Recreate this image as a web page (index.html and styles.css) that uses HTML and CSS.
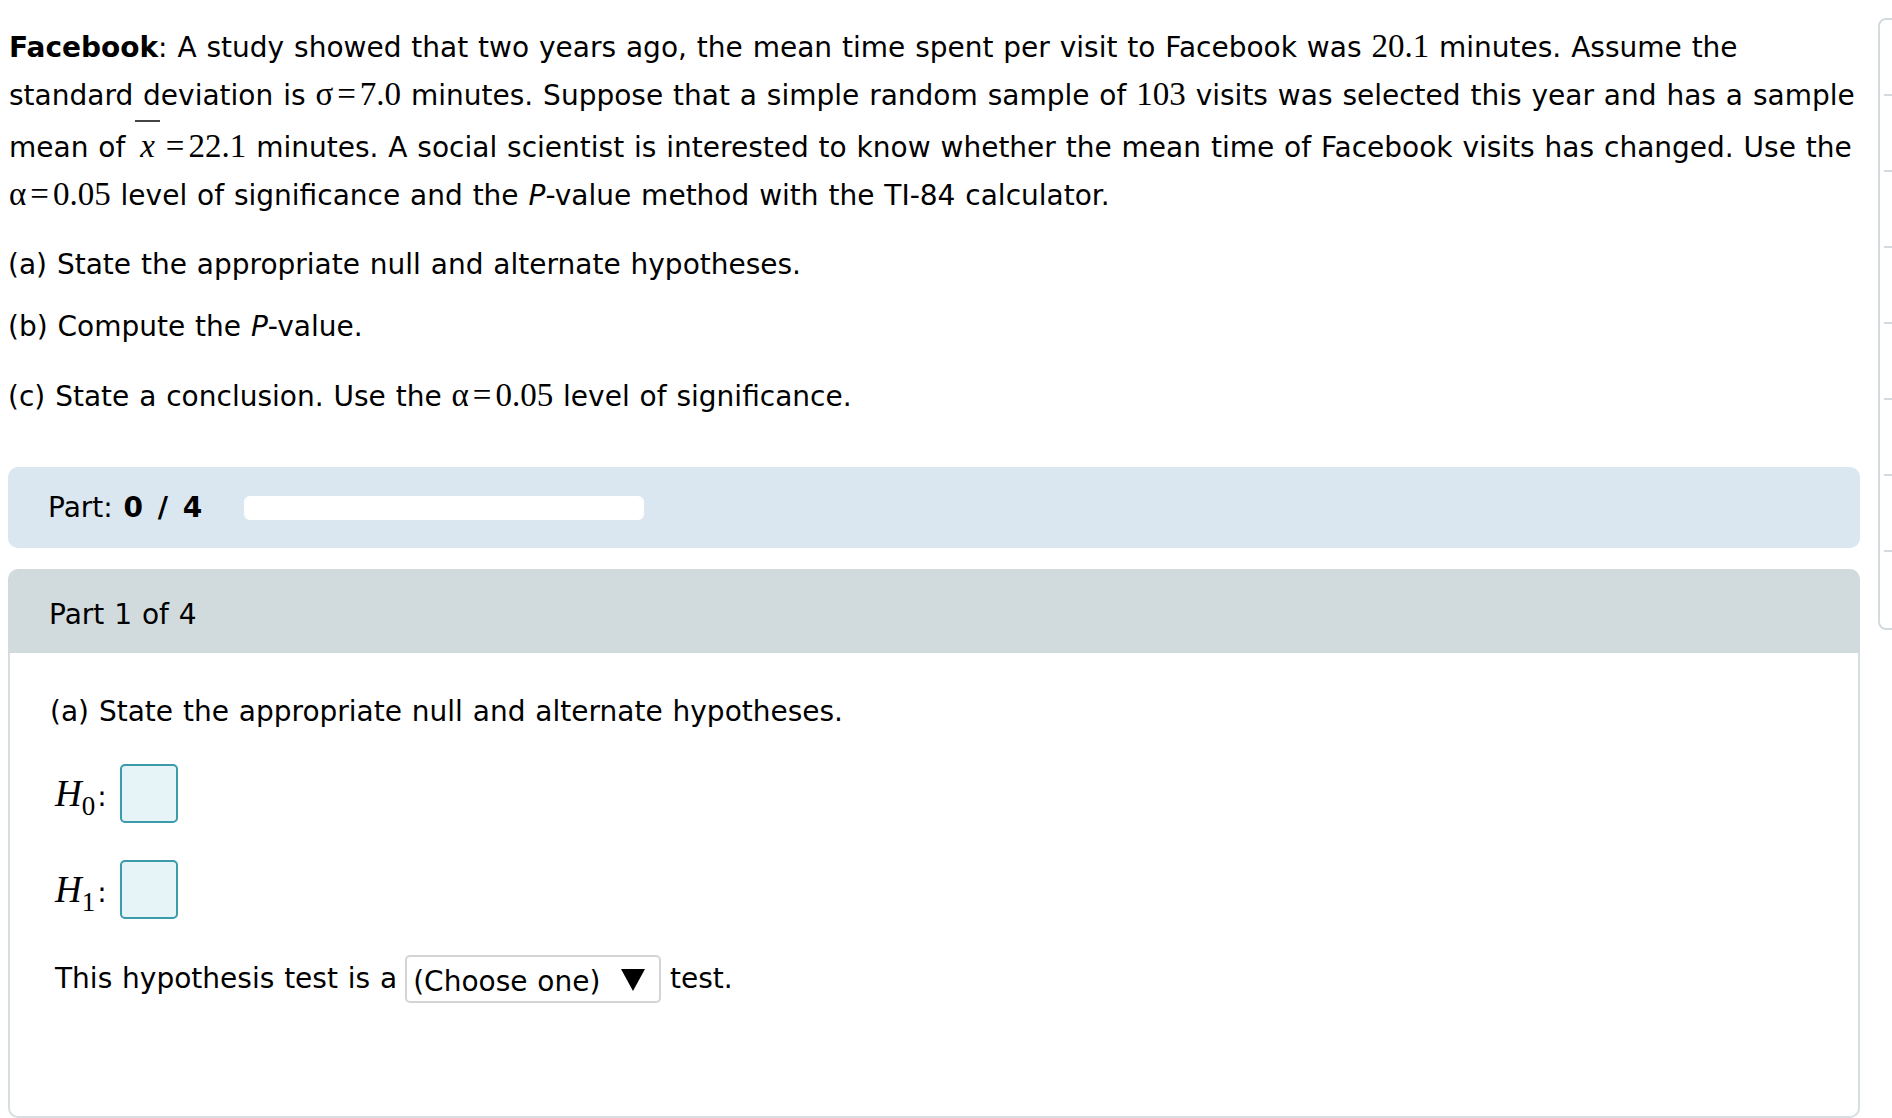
FILE: index.html
```html
<!DOCTYPE html>
<html>
<head>
<meta charset="utf-8">
<link rel="stylesheet" href="styles.css">
</head>
<body>
<div class="page">
  <div class="main">
    <p class="intro"><b>Facebook</b>: A study showed that two years ago, the mean time spent per visit to Facebook was <span class="m">20.1</span> minutes. Assume the standard deviation is <span class="m">σ<span class="eq">=</span>7.0</span> minutes. Suppose that a simple random sample of <span class="m">103</span> visits was selected this year and has a sample mean of <span class="m"><span class="xbar">x</span><span class="eq">=</span>22.1</span> minutes. A social scientist is interested to know whether the mean time of Facebook visits has changed. Use the <span class="m">α<span class="eq">=</span>0.05</span> level of significance and the <i>P</i>-value method with the TI-84 calculator.</p>
    <p class="q qa">(a) State the appropriate null and alternate hypotheses.</p>
    <p class="q qb">(b) Compute the <i>P</i>-value.</p>
    <p class="q qc">(c) State a conclusion. Use the <span class="m">α<span class="eq">=</span>0.05</span> level of significance.</p>

    <div class="progress">
      <span class="progress-label">Part: <b>0 / 4</b></span>
      <span class="progress-bar"></span>
    </div>

    <div class="part">
      <div class="part-head">Part 1 of 4</div>
      <div class="part-body">
        <p class="part-q">(a) State the appropriate null and alternate hypotheses.</p>
        <div class="hyp">
          <span class="hyp-label"><span class="hv">H</span><sub class="hs">0</sub><span class="colon">:</span></span>
          <span class="answer"></span>
        </div>
        <div class="hyp hyp2">
          <span class="hyp-label"><span class="hv">H</span><sub class="hs">1</sub><span class="colon">:</span></span>
          <span class="answer"></span>
        </div>
        <div class="test-line">This hypothesis test is a <span class="select"><span class="select-text">(Choose one)</span><svg class="select-arrow" width="24" height="22" viewBox="0 0 24 22"><polygon points="0,0 24,0 12,22" fill="#000"/></svg></span> test.</div>
      </div>
    </div>
  </div>
  <div class="side">
    <div class="side-box">
      <div class="side-item"></div>
      <div class="side-item"></div>
      <div class="side-item"></div>
      <div class="side-item"></div>
      <div class="side-item"></div>
      <div class="side-item"></div>
      <div class="side-item"></div>
      <div class="side-item last"></div>
    </div>
  </div>
</div>
</body>
</html>
```

FILE: styles.css
```css
html, body {
  margin: 0;
  padding: 0;
  overflow: hidden;
  background: #fff;
}
body {
  font-family: "DejaVu Sans", Verdana, sans-serif;
  font-size: 28px;
  color: #000;
  word-spacing: 1px;
}
.page {
  display: flex;
  gap: 18px;
  padding: 0 0 0 8px;
  width: 1940px;
  height: 1118px;
}
.main {
  width: 1852px;
  flex: none;
  padding-top: 24px;
}
.intro {
  margin: 0;
  line-height: 48px;
  padding-left: 1px;
}
.m {
  font-family: "Liberation Serif", "Times New Roman", serif;
  font-size: 33px;
  line-height: 1;
  word-spacing: 0;
}
.eq {
  margin: 0 4px;
}
.xbar {
  display: inline-block;
  font-style: italic;
  border-top: 2px solid #444;
  padding: 8px 5px 0 5px;
  line-height: 1;
  margin-right: 2px;
}
.q {
  margin: 0;
  line-height: 48px;
}
.qa { margin-top: 21px; }
.qb { margin-top: 14px; }
.qc { margin-top: 22px; }

.progress {
  margin-top: 46px;
  height: 81px;
  background: #dae7f0;
  border-radius: 10px;
  display: flex;
  align-items: center;
  padding-left: 40px;
  gap: 41px;
}
.progress-label {
  word-spacing: 2px;
}
.progress-label b {
  letter-spacing: 1px;
  word-spacing: 3px;
}
.progress-bar {
  display: block;
  width: 400px;
  height: 24px;
  background: #fff;
  border-radius: 6px;
}

.part {
  margin-top: 21px;
}
.part-head {
  height: 84px;
  box-sizing: border-box;
  background: #d1dadd;
  border-radius: 10px 10px 0 0;
  padding: 26px 0 0 41px;
  line-height: 40px;
}
.part-body {
  height: 465px;
  box-sizing: border-box;
  border: 2px solid #d6dee1;
  border-top: none;
  border-radius: 0 0 10px 10px;
  padding: 35px 0 0 40px;
}
.part-q {
  margin: 0;
  line-height: 48px;
}
.hyp {
  display: flex;
  align-items: center;
  margin-top: 28px;
  padding-left: 5px;
  height: 59px;
}
.hyp2 { margin-top: 37px; }
.hyp-label {
  font-family: "Liberation Serif", "Times New Roman", serif;
  font-size: 37px;
  line-height: 1;
  width: 65px;
  flex: none;
}
.hv { font-style: italic; }
.hs {
  font-size: 27px;
  vertical-align: -9px;
  line-height: 0;
}
.colon {
  font-family: "DejaVu Sans", Verdana, sans-serif;
  font-size: 28px;
  margin-left: 2px;
}
.answer {
  display: block;
  width: 58px;
  height: 59px;
  box-sizing: border-box;
  border: 2px solid #3b9bab;
  border-radius: 5px;
  background: #e6f4f8;
}
.test-line {
  margin-top: 36px;
  padding-left: 5px;
  line-height: 48px;
  display: flex;
  align-items: center;
  white-space: pre;
}
.select {
  display: inline-flex;
  align-items: center;
  height: 48px;
  width: 256px;
  flex: none;
  box-sizing: border-box;
  border: 2px solid #d4d4d4;
  border-radius: 5px;
  padding: 6px 14px 0 6px;
  justify-content: space-between;
  margin: 0 -1px 0 -2px;
  line-height: 1;
}
.select-arrow {
  display: block;
  margin-top: -4px;
}

.side {
  flex: none;
  width: 60px;
  padding-top: 18px;
}
.side-box {
  height: 612px;
  box-sizing: border-box;
  border: 2px solid #d3dbde;
  border-radius: 8px;
  display: flex;
  flex-direction: column;
}
.side-item {
  height: 76px;
  flex: none;
  box-sizing: border-box;
  margin-left: 4px;
  border-bottom: 2px solid #d3dbde;
}
.side-item.last {
  flex: 1;
  border-bottom: none;
}
```
